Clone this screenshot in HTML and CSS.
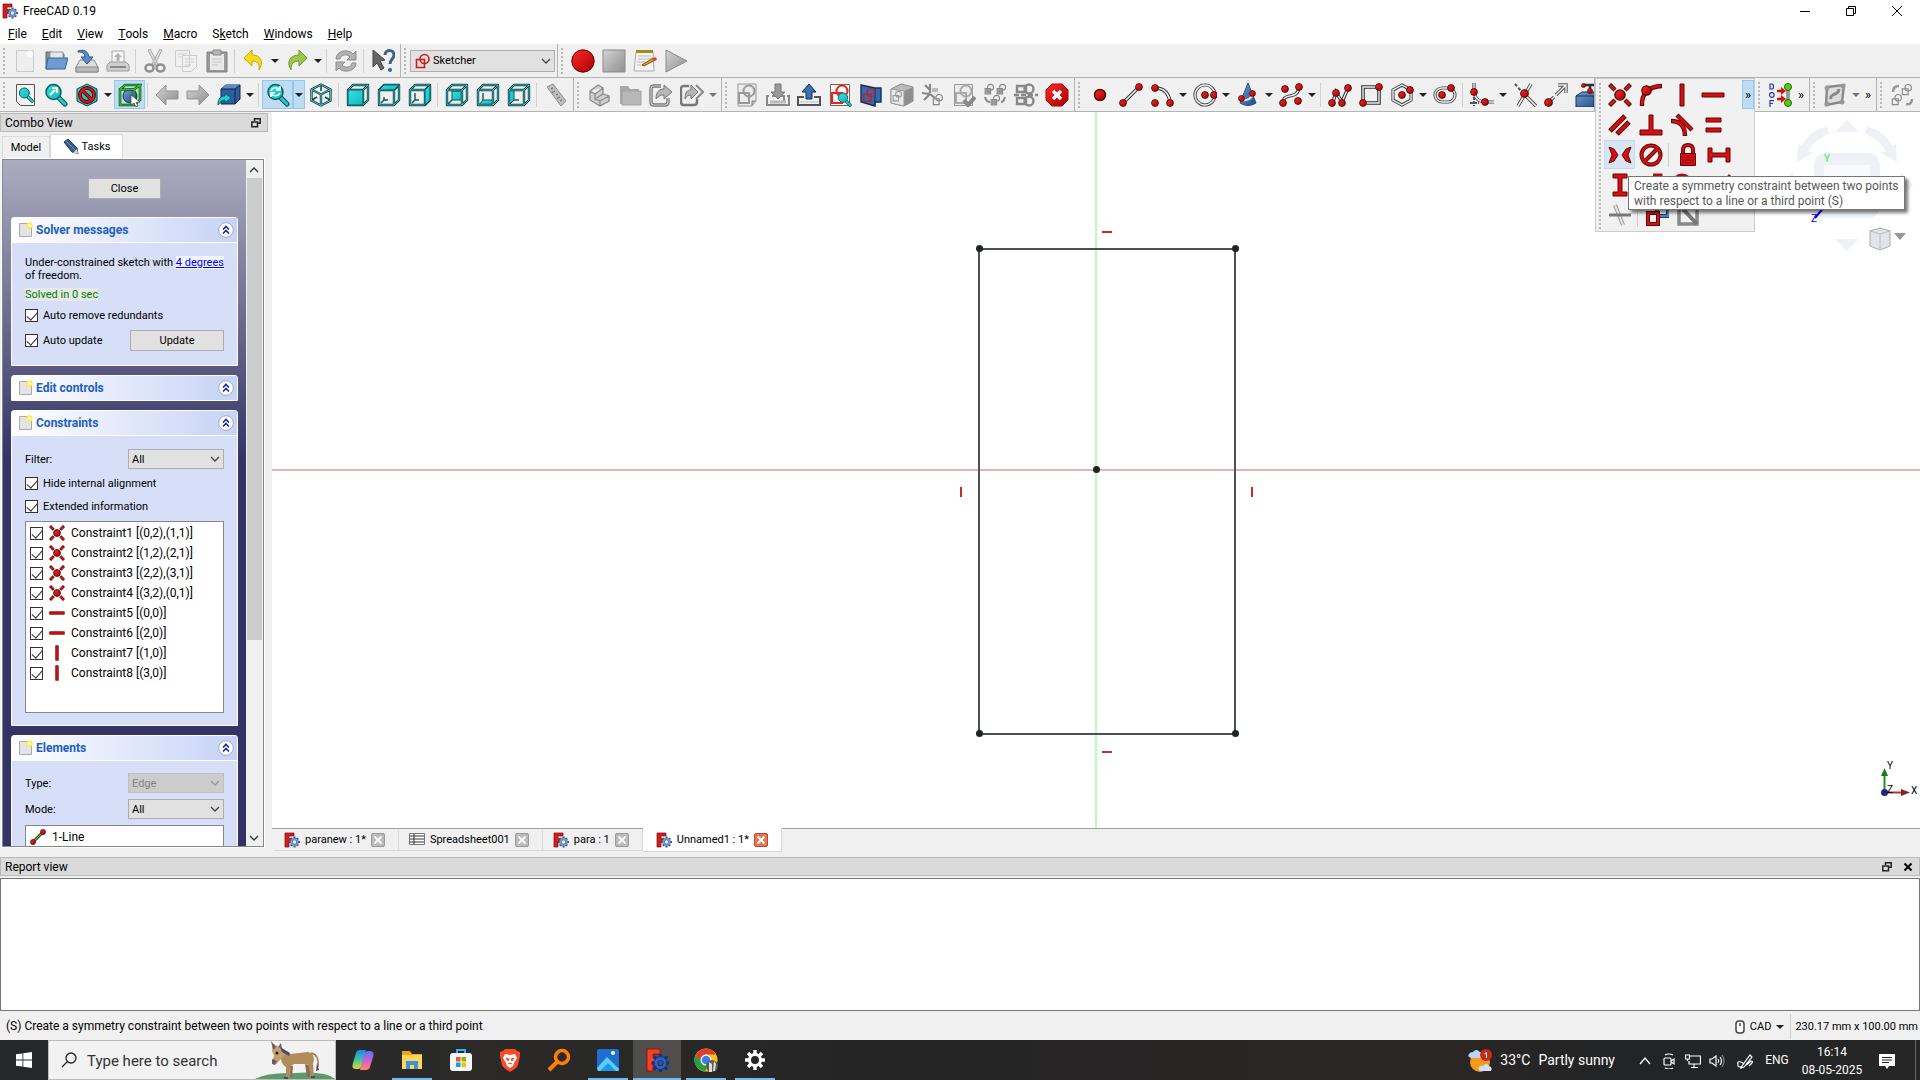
FILE: index.html
```html
<!DOCTYPE html>
<html lang="en">
<head>
  <meta charset="UTF-8">
  <meta name="viewport" content="width=device-width, initial-scale=1.0">
  <title>FreeCAD 0.19</title>
  <link rel="stylesheet" href="styles.css">
</head>
<body>

  <!-- Icon sprite -->
  <svg class="sprite" aria-hidden="true">
    <defs>
      <linearGradient id="g-cyan" x1="0" y1="0" x2="1" y2="1"><stop offset="0" stop-color="#34e0e2"/><stop offset="1" stop-color="#10b8bc"/></linearGradient>
      <linearGradient id="g-red" x1="0" y1="0" x2="1" y2="1"><stop offset="0" stop-color="#ff2a2a"/><stop offset="1" stop-color="#a40000"/></linearGradient>
      <linearGradient id="g-blue" x1="0" y1="0" x2="1" y2="1"><stop offset="0" stop-color="#729fcf"/><stop offset="1" stop-color="#204a87"/></linearGradient>
      <linearGradient id="g-gray" x1="0" y1="0" x2="1" y2="1"><stop offset="0" stop-color="#d4d4d4"/><stop offset="1" stop-color="#8e8e8e"/></linearGradient>
      <linearGradient id="g-copilot" x1="0" y1="0" x2="0" y2="1"><stop offset="0" stop-color="#1f8af0"/><stop offset=".5" stop-color="#38c6a0"/><stop offset="1" stop-color="#e8d030"/></linearGradient>
      <linearGradient id="g-copilot2" x1="0" y1="0" x2="0" y2="1"><stop offset="0" stop-color="#4a7cf0"/><stop offset=".5" stop-color="#d05cd8"/><stop offset="1" stop-color="#ff8a5a"/></linearGradient>
    </defs>

    <symbol id="dot" viewBox="0 0 8 8"><circle cx="4" cy="4" r="3.400" fill="url(#g-red)" stroke="#4a0606" stroke-width=".9"/></symbol>

    <symbol id="app" viewBox="0 0 16 16"><path d="M1 1h9v3H5v2.500h3v3H5V15H1z" fill="#d91a1f" stroke="#7a0c0c" stroke-width=".7"/><g stroke="#34527f" stroke-width="2"><path d="M10.500 4.500v2M10.500 13.500v2M5 10h2M14 10h2M6.800 6.300l1.200 1.200M13 12.500l1.200 1.200M14.200 6.300L13 7.500M8 12.500l-1.200 1.200"/></g><circle cx="10.500" cy="10" r="3" fill="#eef3fa" stroke="#4a72ae" stroke-width="2.400"/><circle cx="10.500" cy="10" r="3.100" fill="none" stroke="#7b9fd2" stroke-width="1.200"/></symbol>
    <symbol id="app-big" viewBox="0 0 24 24"><path d="M2 1h13v5H8v4h5v4H8v9H2z" fill="#f0432a" stroke="#a01008"/><path d="M15.500 6v3M15.500 21v3M6.500 15h3M21.500 15h3M9 8.500l2.500 2.500M19.500 19l2.500 2.500M22 8.500L19.500 11M11.500 19L9 21.500" stroke="#0d2f86" stroke-width="3"/><circle cx="15.500" cy="15" r="4.500" fill="#504e4d" stroke="#0d2f86" stroke-width="4.500"/><circle cx="15.500" cy="15" r="4.500" fill="none" stroke="#2a63c8" stroke-width="2.800"/></symbol>

    <symbol id="new" viewBox="0 0 24 24"><path d="M3.500 1.500h17v21h-17z" fill="#eee" stroke="#c9c9c9"/><circle cx="17" cy="5" r="3.500" fill="#fafafa"/></symbol>
    <symbol id="open" viewBox="0 0 24 24"><path d="M2 20V3h6l2 2h10v14z" fill="#8d8d8d" stroke="#666"/><path d="M6 3h13v9H6z" fill="#e8e8e8" stroke="#999"/><path d="M4 9h20l-3 11H2z" fill="#6f9bd1" stroke="#3465a4"/></symbol>
    <symbol id="save" viewBox="0 0 24 24"><path d="M5 11h14l4 7v5H1v-5z" fill="#ddd" stroke="#8b8b8b"/><path d="M1 18h22v5H1z" fill="#b9b9b9" stroke="#888"/><path d="M3 2c6-2 10 0 11 6h4l-6 7-6-7h4c0-4-3-5-7-5z" fill="#5b8bc4" stroke="#2a5490"/></symbol>
    <symbol id="print" viewBox="0 0 24 24"><path d="M6 2h12v12H6z" fill="#f5f5f5" stroke="#aaa"/><path d="M12 4l4 4h-2.500v4h-3V8H8z" fill="#b0b0b0"/><path d="M4 13h16l3 3v6H1v-6z" fill="#cfcfcf" stroke="#999"/><path d="M4 18h16" stroke="#888" stroke-width="2"/></symbol>
    <symbol id="cut" viewBox="0 0 24 24"><path d="M5 1l2-1 8 15-2 2zM19 1l-2-1-8 15 2 2z" fill="#ddd" stroke="#aaa"/><g fill="none" stroke="#909090" stroke-width="2.500"><ellipse cx="6.500" cy="19" rx="4" ry="3.500"/><ellipse cx="17.500" cy="19" rx="4" ry="3.500"/></g></symbol>
    <symbol id="copy" viewBox="0 0 24 24"><path d="M1.500 1.500h14v16h-14zM8.500 6.500h14v11l-5 5h-9z" fill="#f0f0f0" stroke="#ccc"/><path d="M4 5h9M4 8h4M11 10h9M11 13h9M11 16h6" stroke="#d0d0d0"/></symbol>
    <symbol id="paste" viewBox="0 0 24 24"><path d="M2 3h20v20H2z" fill="#999" stroke="#808080"/><path d="M5 5h14v16H5z" fill="#eaeaea"/><path d="M8 1h8v5H8z" fill="#b8b8b8" stroke="#888"/><path d="M7 10h10M7 13h10M7 16h6" stroke="#c4c4c4"/></symbol>
    <symbol id="undo" viewBox="0 0 24 24"><path d="M10 1v5c9 0 12 7 7 15 1-6-1-9-7-9v5L2 9z" fill="#f6dc1c" stroke="#c8a800"/></symbol>
    <symbol id="redo" viewBox="0 0 24 24"><path d="M14 1v5C5 6 1 13 6 21c0-6 2-9 8-9v5l8-8z" fill="#9fc54d" stroke="#6e9a28"/></symbol>
    <symbol id="refresh" viewBox="0 0 24 24"><path d="M2 10c0-8 12-11 17-5l3-3v9h-9l3-3c-4-4-9-2-10 2zM22 14c0 8-12 11-17 5l-3 3v-9h9l-3 3c4 4 9 2 10-2z" fill="#b2b2b2" stroke="#8c8c8c"/></symbol>
    <symbol id="whats" viewBox="0 0 24 24"><path d="M2 1l12 10-5 1 4 7-3 2-4-7-4 4z" fill="#666" stroke="#444"/><path d="M14 6c0-6 9-6 9 0 0 4-4 4-4 9" fill="none" stroke="#3a628f" stroke-width="3"/><circle cx="19" cy="21" r="2" fill="#3a628f"/></symbol>
    <symbol id="sketcher" viewBox="0 0 16 16"><g fill="none" stroke="#cc1d1d" stroke-width="1.600"><path d="M1.500 6.500h8v8h-8z"/><circle cx="9.500" cy="6" r="4.500"/></g></symbol>
    <symbol id="record" viewBox="0 0 24 24"><circle cx="12" cy="12" r="11.200" fill="url(#g-red)" stroke="#600"/></symbol>
    <symbol id="stop" viewBox="0 0 24 24"><path d="M1 1h22v22H1z" fill="url(#g-gray)" stroke="#8a8a8a"/></symbol>
    <symbol id="macro" viewBox="0 0 24 24"><path d="M3 3h17l1 19H1z" fill="#f4f4f4" stroke="#aaa"/><path d="M3 1h17v3H3z" fill="#a08c18"/><path d="M5 7h13M5 10h13M4 13h8M4 16h8" stroke="#b8b8b8"/><path d="M9 16l11-7 2 2-11 6z" fill="#dea032" stroke="#80540a"/><circle cx="22" cy="10" r="1.800" fill="#e33"/></symbol>
    <symbol id="play" viewBox="0 0 24 24"><path d="M2 1l21 11L2 23z" fill="url(#g-gray)" stroke="#8a8a8a"/></symbol>

    <symbol id="mag" viewBox="0 0 24 24"><path d="M13 13l8 8" stroke="#064c4e" stroke-width="5" stroke-linecap="round"/><path d="M13 13l8 8" stroke="#20cdd0" stroke-width="3" stroke-linecap="round"/><circle cx="9.500" cy="9" r="7.500" fill="url(#g-cyan)" stroke="#085f62" stroke-width="1.500"/></symbol>
    <symbol id="fitall" viewBox="0 0 24 24"><path d="M3.500 1.500h18v21h-14l-4-4z" fill="#f4f4f4" stroke="#555"/><use href="#mag" x="5" y="4" width="16" height="16"/></symbol>
    <symbol id="fitsel" viewBox="0 0 24 24"><use href="#mag"/><path d="M6 12l5-5M8 5h5v5" stroke="#fff" stroke-width="2.200" fill="none"/></symbol>
    <symbol id="drawstyle" viewBox="0 0 24 24"><path d="M12 1l10 5v12l-10 5-10-5V6z" fill="url(#g-cyan)" stroke="#0a4446"/><g fill="none" stroke="#400" stroke-width="3.800"><circle cx="12" cy="12" r="7"/><path d="M7 7l10 10"/></g><g fill="none" stroke="#d8141a" stroke-width="2.200"><circle cx="12" cy="12" r="7"/><path d="M7 7l10 10"/></g></symbol>
    <symbol id="bbox" viewBox="0 0 24 24"><circle cx="12" cy="13" r="7" fill="url(#g-blue)" stroke="#142c50"/><path d="M2 6.500h14V22H2zM2 6.500L7 2h15l-6 4.500M22 2v15l-6 5" fill="none" stroke="#174d10" stroke-width="2.600"/><path d="M2 6.500h14V22H2zM2 6.500L7 2h15l-6 4.500M22 2v15l-6 5" fill="none" stroke="#2fd02a" stroke-width="1.200"/><path d="M13 12l9 7-4 .5 2 3.500-2 1-2-4-3 2z" fill="#fff" stroke="#444" stroke-width=".8"/></symbol>
    <symbol id="back" viewBox="0 0 24 24"><path d="M1 12l10-10v6h12v8H11v6z" fill="url(#g-gray)" stroke="#929292"/></symbol>
    <symbol id="fwd" viewBox="0 0 24 24"><path d="M23 12L13 2v6H1v8h12v6z" fill="url(#g-gray)" stroke="#929292"/></symbol>
    <symbol id="linkgo" viewBox="0 0 24 24"><path d="M4 6l5-4h14v14l-5 5H4z" fill="#2d5f9e" stroke="#0e2444"/><path d="M4 6l5-4h14l-5 4z" fill="#5d8cc6"/><path d="M4 6h14v15M18 6l5-4" fill="none" stroke="#0e2444"/><path d="M1 22c0-7 3-9 7-9v-3l6 5-6 5v-3c-3 0-5 2-7 5z" fill="#1ad0d4" stroke="#0a5a5c"/></symbol>
    <symbol id="sync" viewBox="0 0 24 24"><use href="#mag"/><path d="M5 8c1-4 7-4 9-1M14 10c-2 4-7 3-9 1M14 3v4h-4M5 14v-4h4" stroke="#fff" stroke-width="1.500" fill="none"/></symbol>
    <symbol id="wire" viewBox="0 0 24 24"><path d="M2 7h15v15H2zM2 7l5-5h15l-5 5M22 2v15l-5 5" fill="none" stroke="#0b4548" stroke-width="2.400" stroke-linejoin="round"/><path d="M2 7h15v15H2zM2 7l5-5h15l-5 5M22 2v15l-5 5" fill="none" stroke="#4fc6c9" stroke-width=".8"/></symbol>
    <symbol id="iso" viewBox="0 0 24 24"><path d="M12 1.500l9.500 5v11l-9.500 5-9.500-5v-11zM2.500 6.500l9.500 5 9.500-5M12 11.500v11" fill="none" stroke="#0b4548" stroke-width="2.400"/><path d="M12 2v6M3 17l5-3M21 17l-5-3" stroke="#0b4548" stroke-width="1.500"/><path d="M12 1.500l9.500 5v11l-9.500 5-9.500-5v-11zM2.500 6.500l9.500 5 9.500-5M12 11.500v11" fill="none" stroke="#6fd4d6" stroke-width=".8"/></symbol>
    <symbol id="front" viewBox="0 0 24 24"><use href="#wire"/><path d="M2 7h15v15H2z" fill="url(#g-cyan)" stroke="#0b5558"/></symbol>
    <symbol id="top" viewBox="0 0 24 24"><path d="M7 14v3M4 20l3-3h4" fill="none" stroke="#0b5558" stroke-width="1.400"/><use href="#wire"/><path d="M2 7l5-5h15l-5 5z" fill="url(#g-cyan)" stroke="#0b5558"/></symbol>
    <symbol id="right" viewBox="0 0 24 24"><path d="M7 10v7M4 20l3-3h4" fill="none" stroke="#0b5558" stroke-width="1.400"/><use href="#wire"/><path d="M17 7l5-5v15l-5 5z" fill="url(#g-cyan)" stroke="#0b5558"/></symbol>
    <symbol id="rear" viewBox="0 0 24 24"><path d="M7 8h10v9H7z" fill="url(#g-cyan)" stroke="#0b5558"/><path d="M3 21l4-4" stroke="#0b5558" stroke-width="1.400"/><use href="#wire"/></symbol>
    <symbol id="bottom" viewBox="0 0 24 24"><path d="M3 22l4-5h10v5z" fill="url(#g-cyan)" stroke="#0b5558"/><path d="M7 10v7" stroke="#0b5558" stroke-width="1.400"/><use href="#wire"/></symbol>
    <symbol id="left" viewBox="0 0 24 24"><path d="M2 7h5v10l-5 5z" fill="url(#g-cyan)" stroke="#0b5558"/><path d="M7 17h5" stroke="#0b5558" stroke-width="1.400"/><use href="#wire"/></symbol>
    <symbol id="ruler" viewBox="0 0 24 24"><path d="M3 4l6-3 13 17-5 5z" fill="#bdbdbd" stroke="#909090"/><path d="M9 5l-2 1M11 8l-3 1.500M14 11l-2 1M16 14l-3 1.500M18 17l-2 1" stroke="#666"/></symbol>

    <symbol id="part" viewBox="0 0 24 24"><path d="M3 8l8-6 5 3v6l6 2v5l-9 5-10-6zM3 8l5 3 8-6M8 11v5l5 2v5M13 18l9-5M8 16l8-5" fill="#cfcfcf" stroke="#8c8c8c" stroke-width="1.300"/></symbol>
    <symbol id="folder" viewBox="0 0 24 24"><path d="M2 3h8l2 3h9v15H2z" fill="#a8a8a8"/><path d="M4 8h19v14H4z" fill="#b8b8b8" stroke="#a2a2a2"/></symbol>
    <symbol id="link" viewBox="0 0 24 24"><path d="M12 3H5Q2 3 2 6v13q0 3 3 3h11q3 0 3-3v-4" fill="none" stroke="#777" stroke-width="3.400"/><path d="M12 3H5Q2 3 2 6v13q0 3 3 3h11q3 0 3-3v-4" fill="none" stroke="#ccc" stroke-width="1.200"/><path d="M7 16c0-7 3-10 8-10V2l8 7-8 7v-4c-4 0-5 1-8 4z" fill="#b6b6b6" stroke="#777"/></symbol>
    <symbol id="links" viewBox="0 0 24 24"><path d="M9 3H4Q1 3 1 6v13q0 3 3 3h10q3 0 3-3v-3" fill="none" stroke="#777" stroke-width="2.400"/><path d="M5 16c0-7 2-9 6-9V2l7 7-7 7v-4c-3 0-4 1-6 4z" fill="#b6b6b6" stroke="#777"/><path d="M16 2l7 7-7 7" fill="none" stroke="#888" stroke-width="2"/></symbol>

    <symbol id="shape" viewBox="0 0 24 24"><g fill="none" stroke="currentColor" stroke-width="2"><path d="M4 10h10v10H4z"/><circle cx="14" cy="8" r="5.500"/></g></symbol>
    <symbol id="newsketch" viewBox="0 0 24 24"><path d="M3 1h18v17l-4 5H3z" fill="#ececec" stroke="#999"/><path d="M17 23v-5h4" fill="#bbb" stroke="#888"/><use href="#shape" color="#999"/></symbol>
    <symbol id="editsketch" viewBox="0 0 24 24"><path d="M3 13H1v9h22v-9h-2M6 13h12v6" fill="none" stroke="#888" stroke-width="2"/><path d="M4 19h16" stroke="#bbb" stroke-width="3"/><path d="M9 1h6v8h4l-7 7-7-7h4z" fill="#999" stroke="#777"/></symbol>
    <symbol id="leavesketch" viewBox="0 0 24 24"><path d="M7 14H1v8h22v-8h-6" fill="none" stroke="#4c5658" stroke-width="2"/><path d="M3 19h18" stroke="#d8d8d8" stroke-width="2"/><path d="M9 16V9H5l7-8 7 8h-4v7z" fill="#3a70b4" stroke="#122c52"/></symbol>
    <symbol id="viewsketch" viewBox="0 0 24 24"><path d="M2.500 1.500h19v21h-19z" fill="#f6f6f6" stroke="#666"/><use href="#shape" color="#f0201c"/><use href="#mag" x="9" y="9" width="15" height="15"/></symbol>
    <symbol id="section" viewBox="0 0 24 24"><path d="M2 2l14 3h6v14h-6v4L2 19z" fill="#326ab0" stroke="#172e52" stroke-width="1.400"/><path d="M16 5v18" stroke="#172e52"/><use href="#shape" x="2" y="4" width="17" height="17" color="#d01824"/></symbol>
    <symbol id="mapsketch" viewBox="0 0 24 24"><path d="M1 6l10-5 12 3v14l-9 5-13-3z" fill="#bbb" stroke="#888"/><path d="M14 8l9-4v14l-9 5z" fill="#8e8e8e"/><path d="M1 6l13 2v15L1 20z" fill="#eaeaea" stroke="#999"/><use href="#shape" x="1" y="7" width="13" height="13" color="#999"/></symbol>
    <symbol id="reorient" viewBox="0 0 24 24"><path d="M9 1v9M1 10l8 1M3 17l6-6M9 11l5 4M4 2l5 5" stroke="#888" stroke-width="2.200"/><path d="M11 5h6v4h-6z" fill="#bbb"/><use href="#shape" x="10" y="10" width="14" height="14" color="#888"/></symbol>
    <symbol id="validate" viewBox="0 0 24 24"><path d="M2.500 1.500h18v21h-18z" fill="#ececec" stroke="#999"/><use href="#shape" color="#aaa"/><path d="M12 17l4 5 7-8" stroke="#888" stroke-width="4" fill="none"/></symbol>
    <symbol id="merge" viewBox="0 0 24 24"><g color="#888" stroke-width="3"><use href="#shape" width="13" height="13"/><use href="#shape" x="12" width="13" height="13"/><use href="#shape" x="6" y="11" width="13" height="13"/></g><g fill="#999"><path d="M2 6h5v5H2zM14 6h5v5h-5zM8 17h5v5H8z"/></g><path d="M2 14c1 4 3 5 5 5M22 14c-1 4-3 5-4 5" stroke="#888" stroke-width="2" fill="none"/></symbol>
    <symbol id="mirror" viewBox="0 0 24 24"><g fill="none" stroke="#888" stroke-width="2.400"><path d="M3 3h9v6H3zM3 15h9v6H3z"/><circle cx="15" cy="6" r="4.500"/><circle cx="15" cy="18" r="4.500"/><path d="M0 12h24" stroke-dasharray="5 2"/></g></symbol>
    <symbol id="stopop" viewBox="0 0 24 24"><path d="M7 1h10l6 6v10l-6 6H7l-6-6V7z" fill="url(#g-red)" stroke="#b00"/><path d="M8 8l8 8M16 8l-8 8" stroke="#fff" stroke-width="3.400"/></symbol>

    <symbol id="point" viewBox="0 0 24 24"><use href="#dot" x="5.500" y="5.500" width="13" height="13"/></symbol>
    <symbol id="line" viewBox="0 0 24 24"><path d="M5 19L19 5" stroke="#333" stroke-width="3.600"/><path d="M5 19L19 5" stroke="#eee" stroke-width="1.600"/><use href="#dot" y="16" width="8" height="8"/><use href="#dot" x="16" y="0" width="8" height="8"/></symbol>
    <symbol id="arc" viewBox="0 0 24 24"><path d="M5 5q13 0 15 14" fill="none" stroke="#333" stroke-width="3.600"/><path d="M5 5q13 0 15 14" fill="none" stroke="#eee" stroke-width="1.600"/><use href="#dot" x="1" y="1" width="8" height="8"/><use href="#dot" x="1" y="16" width="8" height="8"/><use href="#dot" x="16" y="16" width="8" height="8"/></symbol>
    <symbol id="circle" viewBox="0 0 24 24"><circle cx="12" cy="12" r="10" fill="none" stroke="#444" stroke-width="3.200"/><circle cx="12" cy="12" r="10" fill="none" stroke="#eee" stroke-width="1.400"/><use href="#dot" x="8" y="8" width="8" height="8"/><use href="#dot" x="17" y="8" width="8" height="8"/></symbol>
    <symbol id="conic" viewBox="0 0 24 24"><path d="M12 0l8 20q-8 5-16 0z" fill="url(#g-blue)" stroke="#24508c"/><path d="M5 17c5 1 11-1 12-6" stroke="#ddd" stroke-width="2" fill="none"/><use href="#dot" x="2" y="12" width="7" height="7"/><use href="#dot" x="13" y="7" width="7" height="7"/></symbol>
    <symbol id="bspline" viewBox="0 0 24 24"><path d="M4 20C4 8 19 18 20 4" fill="none" stroke="#444" stroke-width="3.400"/><path d="M4 20C4 8 19 18 20 4" fill="none" stroke="#eee" stroke-width="1.400"/><use href="#dot" x="2" y="2" width="8" height="8"/><use href="#dot" x="16" y="0" width="8" height="8"/><use href="#dot" x="0" y="16" width="8" height="8"/><use href="#dot" x="15" y="14" width="8" height="8"/></symbol>
    <symbol id="polyline" viewBox="0 0 24 24"><path d="M5 19L8 9l6 10 6-14" fill="none" stroke="#333" stroke-width="3.400"/><path d="M5 19L8 9l6 10 6-14" fill="none" stroke="#eee" stroke-width="1.400"/><use href="#dot" y="16" width="8" height="8"/><use href="#dot" x="4" y="6" width="8" height="8"/><use href="#dot" x="10" y="16" width="8" height="8"/><use href="#dot" x="16" y="1" width="8" height="8"/></symbol>
    <symbol id="rect" viewBox="0 0 24 24"><path d="M4 4h16v16H4z" fill="none" stroke="#333" stroke-width="3.600"/><path d="M4 4h16v16H4z" fill="none" stroke="#eee" stroke-width="1.400"/><use href="#dot" y="16" width="8" height="8"/><use href="#dot" x="16" width="8" height="8"/></symbol>
    <symbol id="hexagon" viewBox="0 0 24 24"><path d="M12 2l9 5v10l-9 5-9-5V7z" fill="none" stroke="#444" stroke-width="3.200"/><path d="M12 2l9 5v10l-9 5-9-5V7z" fill="none" stroke="#eee" stroke-width="1.400"/><use href="#dot" x="8" y="8" width="8" height="8"/><use href="#dot" x="16" y="3" width="8" height="8"/></symbol>
    <symbol id="slot" viewBox="0 0 24 24"><rect x="2" y="5" width="20" height="14" rx="7" fill="none" stroke="#444" stroke-width="3.200"/><rect x="2" y="5" width="20" height="14" rx="7" fill="none" stroke="#eee" stroke-width="1.400"/><use href="#dot" x="5" y="8" width="8" height="8"/><use href="#dot" x="14" y="1" width="8" height="8"/></symbol>
    <symbol id="fillet" viewBox="0 0 24 24"><path d="M4 0v10q2 9 12 9h8" fill="none" stroke="#444" stroke-width="3.200"/><path d="M4 0v10q2 9 12 9h8" fill="none" stroke="#eee" stroke-width="1.400"/><path d="M4 14v9M0 20h9" stroke="#555" stroke-width="2" stroke-dasharray="3 1"/><use href="#dot" y="5" width="8" height="8"/><use href="#dot" x="11" y="15" width="8" height="8"/></symbol>
    <symbol id="trim" viewBox="0 0 24 24"><path d="M18 1L5 23M10 10l13 13" stroke="#444" stroke-width="3.400"/><path d="M18 1L5 23M10 10l13 13" stroke="#eee" stroke-width="1.600"/><path d="M2 1l8 9" stroke="#555" stroke-width="2" stroke-dasharray="3 2"/><use href="#dot" x="7" y="6" width="9" height="9"/></symbol>
    <symbol id="extend" viewBox="0 0 24 24"><path d="M5 19l5-5M12 12l9-9M14 2h8v8" fill="none" stroke="#555" stroke-width="3.400"/><path d="M5 19l5-5M12 12l9-9M14 2h8v8" fill="none" stroke="#eee" stroke-width="1.400"/><use href="#dot" y="15" width="9" height="9"/></symbol>
    <symbol id="external" viewBox="0 0 24 24"><path d="M1 13l6-4h17v10l-5 5H1z" fill="url(#g-blue)" stroke="#14305a"/><path d="M1 13h18v11" fill="none" stroke="#14305a"/><path d="M8 2h14M15 3v7" stroke="#333" stroke-width="2.500"/><use href="#dot" x="6" width="5" height="5"/><use href="#dot" x="12" y="5" width="6" height="6"/></symbol>

    <symbol id="coincident" viewBox="0 0 24 24"><path d="M1.500 1.500L7 7M22.500 1.500L17 7M1.500 22.500L7 17M22.500 22.500L17 17" stroke="#5c0808" stroke-width="4.400"/><path d="M2.300 2.300l4 4M21.700 2.300l-4 4M2.300 21.700l4-4M21.700 21.700l-4-4" stroke="#e01416" stroke-width="2.600"/><circle cx="12" cy="12" r="6.300" fill="#f1f1f1"/><use href="#dot" x="6" y="6" width="12" height="12"/></symbol>
    <symbol id="ponobj" viewBox="0 0 24 24"><path d="M3 23q-1-19 20-20" fill="none" stroke="#5c0808" stroke-width="4.400"/><path d="M3 22q0-18 19-19" fill="none" stroke="#d80f12" stroke-width="2.600"/><use href="#dot" x="2" y="2" width="11" height="11"/></symbol>
    <symbol id="vert" viewBox="0 0 24 24"><path d="M10 1h4v22h-4z" fill="#d80f12" stroke="#5c0808"/></symbol>
    <symbol id="horiz" viewBox="0 0 24 24"><path d="M1 10h22v4H1z" fill="#d80f12" stroke="#5c0808"/></symbol>
    <symbol id="parallel" viewBox="0 0 24 24"><path d="M2 18L17 3M9 21L21 9" stroke="#5c0808" stroke-width="5"/><path d="M2.700 17.300L16.300 3.700M9.700 20.300L20.300 9.700" stroke="#d80f12" stroke-width="3"/></symbol>
    <symbol id="perp" viewBox="0 0 24 24"><path d="M10 2h4v15h9v5H1v-5h9z" fill="#d80f12" stroke="#5c0808"/></symbol>
    <symbol id="tangent" viewBox="0 0 24 24"><path d="M7 2l15 15M1 8q14 0 14 15" fill="none" stroke="#5c0808" stroke-width="4.400"/><path d="M7.700 2.700l13.600 13.600M2 8q13 1 13 14" fill="none" stroke="#d80f12" stroke-width="2.600"/></symbol>
    <symbol id="equal" viewBox="0 0 24 24"><path d="M5 5h15v4H5zM5 15h15v4H5z" fill="#d80f12" stroke="#5c0808"/></symbol>
    <symbol id="symm" viewBox="0 0 24 24"><path d="M1 4l5 2 4 6-4 6-5 2 3-8zM23 4l-5 2-4 6 4 6 5 2-3-8z" fill="#d80f12" stroke="#5c0808"/></symbol>
    <symbol id="block" viewBox="0 0 24 24"><g fill="none" stroke="#5c0808" stroke-width="4"><circle cx="12" cy="12" r="9.500"/><path d="M5 19L19 5"/></g><g fill="none" stroke="#d80f12" stroke-width="2.200"><circle cx="12" cy="12" r="9.500"/><path d="M5 19L19 5"/></g></symbol>
    <symbol id="lock" viewBox="0 0 24 24"><path d="M7 11V7q0-5 5-5t5 5v4" fill="none" stroke="#5c0808" stroke-width="4"/><path d="M7 12V7q0-5 5-5t5 5v5" fill="none" stroke="#d80f12" stroke-width="2.200"/><path d="M4.500 10.500h15v12h-15z" fill="#d80f12" stroke="#5c0808"/><path d="M6 14h12M6 17h12M6 20h12" stroke="#8b1010"/></symbol>
    <symbol id="hdist" viewBox="0 0 24 24"><path d="M1 5h4v5h14V5h4v14h-4v-5H5v5H1z" fill="#d80f12" stroke="#5c0808"/></symbol>
    <symbol id="vdist" viewBox="0 0 24 24"><path d="M5 1h14v4h-5v14h5v4H5v-4h5V5H5z" fill="#d80f12" stroke="#5c0808"/></symbol>
    <symbol id="dist" viewBox="0 0 24 24"><path d="M3 21L21 3M14 2h8v8" fill="none" stroke="#b01014" stroke-width="3"/></symbol>
    <symbol id="radius" viewBox="0 0 24 24"><circle cx="12" cy="11" r="9" fill="none" stroke="#b01014" stroke-width="3"/></symbol>
    <symbol id="angle" viewBox="0 0 24 24"><path d="M2 22L17 2M2 22h20" fill="none" stroke="#b01014" stroke-width="3"/></symbol>
    <symbol id="snell" viewBox="0 0 24 24"><path d="M7 2l8 20" stroke="#999" stroke-width="4"/><path d="M7 2l8 20" stroke="#e6e6e6" stroke-width="2"/><path d="M1 12h22" stroke="#777" stroke-width="3"/></symbol>
    <symbol id="driving" viewBox="0 0 24 24"><path d="M12 2h11v11H12z" fill="none" stroke="#1b3c68" stroke-width="4"/><path d="M12 2h11v11H12z" fill="none" stroke="#4d86c8" stroke-width="2"/><path d="M3 10h10v11H3z" fill="#f1f1f1" stroke="#5c0808" stroke-width="4"/><path d="M3 10h10v11H3z" fill="none" stroke="#d80f12" stroke-width="2.200"/></symbol>
    <symbol id="activate" viewBox="0 0 24 24"><path d="M3 4h18v17H3z" fill="none" stroke="#888" stroke-width="3.500"/><path d="M4 3l17 18" stroke="#777" stroke-width="4"/></symbol>

    <symbol id="dof" viewBox="0 0 24 24"><path d="M20 4v17" stroke="#445" stroke-width="3"/><path d="M20 4v17" stroke="#eee" stroke-width="1"/><path d="M9 8h6M9 16h6" stroke="#b11" stroke-width="2.500"/><path d="M13 4l5 4-5 4zM13 12l5 4-5 4z" fill="#d11"/><circle cx="20" cy="4" r="3.500" fill="#5c1" stroke="#260"/><circle cx="20" cy="20" r="3.500" fill="#5c1" stroke="#260"/><g fill="none" stroke="#2538b8" stroke-width="1.200"><path d="M2 1h1.500q2 0 2 2.500T3.500 6H2zM2 17v7M2 17.600h4M2 20.500h3"/><circle cx="3.800" cy="12" r="2.300"/></g></symbol>
    <symbol id="bsinfo" viewBox="0 0 24 24"><path d="M4 4l17-2-2 17-16 3z" fill="#ddd" stroke="#888" stroke-width="2.400"/><path d="M8 16c-2-6 8-3 8-10" fill="none" stroke="#888" stroke-width="3"/><g fill="#999"><circle cx="4" cy="5" r="2.500"/><circle cx="20" cy="3" r="2.500"/><circle cx="19" cy="19" r="2.500"/><circle cx="4" cy="21" r="2.500"/></g></symbol>
    <symbol id="vspace" viewBox="0 0 24 24"><g color="#8a8a8a"><use href="#shape" x="10" y="0" width="14" height="14"/><use href="#shape" x="0" y="10" width="14" height="14"/></g><path d="M3 9q0-6 6-6M22 16q0 6-6 5" fill="none" stroke="#999" stroke-width="2.500"/></symbol>

    <symbol id="task" viewBox="0 0 16 16"><path d="M1.500 1.500h12v13h-12z" fill="#e4e4e4" stroke="#aaa"/><circle cx="11.500" cy="3.500" r="3.200" fill="#f7ef4a"/><circle cx="11.500" cy="3.500" r="1.300" fill="#fff"/></symbol>
    <symbol id="pencil" viewBox="0 0 16 16"><path d="M1 3l4-3 9 9 1 6-6-2z" fill="#3a6089" stroke="#1a3350"/><path d="M3 2l9 9" stroke="#6f93b8"/><path d="M14 10l1 5-5-1z" fill="#ddd"/></symbol>
    <symbol id="chevrons" viewBox="0 0 16 16"><circle cx="8" cy="8" r="7.300" fill="#fff" stroke="#a4a8cc"/><path d="M5 7.500l3-3 3 3M5 11.500l3-3 3 3" fill="none" stroke="#0c2e94" stroke-width="1.600"/></symbol>
    <symbol id="greenline" viewBox="0 0 16 16"><path d="M3 13L13 3" stroke="#2c5a14" stroke-width="3"/><path d="M3 13L13 3" stroke="#7cc242" stroke-width="1"/><use href="#dot" y="10" width="6" height="6"/><use href="#dot" x="10" width="6" height="6"/></symbol>
    <symbol id="float" viewBox="0 0 10 10"><path d="M3.500 3V.8h5.700v4.400H7" fill="none" stroke="#222" stroke-width="1.500"/><path d="M.8 4h5.700v4.700H.8z" fill="none" stroke="#222" stroke-width="1.500"/></symbol>
    <symbol id="xmark" viewBox="0 0 10 10"><path d="M1.500 1.500l7 7M8.500 1.500l-7 7" stroke="currentColor" stroke-width="2"/></symbol>
    <symbol id="down" viewBox="0 0 10 6"><path d="M1 1l4 4 4-4" fill="none" stroke="currentColor" stroke-width="1.300"/></symbol>
    <symbol id="sheet" viewBox="0 0 16 14"><path d="M.5.500h15v11H.5z" fill="#fff" stroke="#777"/><path d="M1 3h14M1 6h14M1 9h14M5 1v10" stroke="#333"/></symbol>
  </svg>

  <header class="titlebar">
    <svg class="i16"><use href="#app"/></svg>
    <h1>FreeCAD 0.19</h1>
    <div class="window-buttons">
      <button aria-label="Minimize"><svg class="i10" viewBox="0 0 10 10"><path d="M0 5.500h10" stroke="#000"/></svg></button>
      <button aria-label="Restore"><svg class="i10" viewBox="0 0 10 10"><path d="M.5 2.500h7v7h-7zM2.500 2.500v-2h7v7h-2" fill="none" stroke="#000"/></svg></button>
      <button aria-label="Close"><svg class="i10" viewBox="0 0 10 10"><path d="M0 0l10 10M10 0L0 10" stroke="#000"/></svg></button>
    </div>
  </header>

  <nav class="menubar">
    <button><u>F</u>ile</button>
    <button><u>E</u>dit</button>
    <button><u>V</u>iew</button>
    <button><u>T</u>ools</button>
    <button><u>M</u>acro</button>
    <button>S<u>k</u>etch</button>
    <button><u>W</u>indows</button>
    <button><u>H</u>elp</button>
  </nav>

  <div class="toolrow">
    <div class="toolbar">
      <button class="tool" aria-label="New"><svg><use href="#new"/></svg></button>
      <button class="tool" aria-label="Open"><svg><use href="#open"/></svg></button>
      <button class="tool" aria-label="Save"><svg><use href="#save"/></svg></button>
      <button class="tool" aria-label="Print"><svg><use href="#print"/></svg></button>
      <i class="sep"></i>
      <button class="tool" aria-label="Cut"><svg><use href="#cut"/></svg></button>
      <button class="tool" aria-label="Copy"><svg><use href="#copy"/></svg></button>
      <button class="tool" aria-label="Paste"><svg><use href="#paste"/></svg></button>
      <i class="sep"></i>
      <button class="tool" aria-label="Undo"><svg><use href="#undo"/></svg></button>
      <button class="caret" aria-label="Undo list"></button>
      <button class="tool" aria-label="Redo"><svg><use href="#redo"/></svg></button>
      <button class="caret" aria-label="Redo list"></button>
      <i class="sep"></i>
      <button class="tool" aria-label="Refresh"><svg><use href="#refresh"/></svg></button>
      <i class="sep"></i>
      <button class="tool" aria-label="What's this?"><svg><use href="#whats"/></svg></button>
    </div>
    <div class="toolbar">
      <div class="combo workbench">
        <svg class="i16 combo-icon"><use href="#sketcher"/></svg>
        <select aria-label="Workbench"><option>Sketcher</option></select>
        <svg class="combo-arrow"><use href="#down"/></svg>
      </div>
    </div>
    <div class="toolbar toolbar-last">
      <button class="tool" aria-label="Record macro"><svg><use href="#record"/></svg></button>
      <button class="tool" aria-label="Stop recording"><svg><use href="#stop"/></svg></button>
      <button class="tool" aria-label="Macros"><svg><use href="#macro"/></svg></button>
      <button class="tool" aria-label="Run macro"><svg><use href="#play"/></svg></button>
    </div>
  </div>

  <div class="toolrow">
    <div class="toolbar">
      <button class="tool" aria-label="Fit all"><svg><use href="#fitall"/></svg></button>
      <button class="tool" aria-label="Fit selection"><svg><use href="#fitsel"/></svg></button>
      <button class="tool" aria-label="Draw style"><svg><use href="#drawstyle"/></svg></button>
      <button class="caret" aria-label="Draw styles"></button>
      <button class="tool on" aria-label="Bounding box"><svg><use href="#bbox"/></svg></button>
      <i class="sep"></i>
      <button class="tool" aria-label="Back"><svg><use href="#back"/></svg></button>
      <button class="tool" aria-label="Forward"><svg><use href="#fwd"/></svg></button>
      <button class="tool" aria-label="Go to linked object"><svg><use href="#linkgo"/></svg></button>
      <button class="caret" aria-label="Link options"></button>
      <i class="sep"></i>
      <button class="tool on" aria-label="Sync view"><svg><use href="#sync"/></svg></button>
      <button class="caret on" aria-label="Sync options"></button>
      <button class="tool" aria-label="Isometric"><svg><use href="#iso"/></svg></button>
      <i class="sep"></i>
      <button class="tool" aria-label="Front"><svg><use href="#front"/></svg></button>
      <button class="tool" aria-label="Top"><svg><use href="#top"/></svg></button>
      <button class="tool" aria-label="Right"><svg><use href="#right"/></svg></button>
      <i class="sep"></i>
      <button class="tool" aria-label="Rear"><svg><use href="#rear"/></svg></button>
      <button class="tool" aria-label="Bottom"><svg><use href="#bottom"/></svg></button>
      <button class="tool" aria-label="Left"><svg><use href="#left"/></svg></button>
      <i class="sep"></i>
      <button class="tool" aria-label="Measure distance"><svg><use href="#ruler"/></svg></button>
    </div>
    <div class="toolbar">
      <button class="tool" aria-label="Create part"><svg><use href="#part"/></svg></button>
      <button class="tool" aria-label="Create group"><svg><use href="#folder"/></svg></button>
      <button class="tool" aria-label="Make link"><svg><use href="#link"/></svg></button>
      <button class="tool" aria-label="Make sub-link"><svg><use href="#links"/></svg></button>
      <button class="caret off" aria-label="Link actions"></button>
    </div>
    <div class="toolbar">
      <button class="tool" aria-label="Create sketch"><svg><use href="#newsketch"/></svg></button>
      <button class="tool" aria-label="Edit sketch"><svg><use href="#editsketch"/></svg></button>
      <button class="tool" aria-label="Leave sketch"><svg><use href="#leavesketch"/></svg></button>
      <button class="tool" aria-label="View sketch"><svg><use href="#viewsketch"/></svg></button>
      <button class="tool" aria-label="View section"><svg><use href="#section"/></svg></button>
      <button class="tool" aria-label="Map sketch to face"><svg><use href="#mapsketch"/></svg></button>
      <button class="tool" aria-label="Reorient sketch"><svg><use href="#reorient"/></svg></button>
      <button class="tool" aria-label="Validate sketch"><svg><use href="#validate"/></svg></button>
      <button class="tool" aria-label="Merge sketches"><svg><use href="#merge"/></svg></button>
      <button class="tool" aria-label="Mirror sketch"><svg><use href="#mirror"/></svg></button>
      <button class="tool" aria-label="Stop operation"><svg><use href="#stopop"/></svg></button>
    </div>
    <div class="toolbar geometry">
      <button class="tool" aria-label="Point"><svg><use href="#point"/></svg></button>
      <button class="tool" aria-label="Line"><svg><use href="#line"/></svg></button>
      <button class="tool" aria-label="Arc"><svg><use href="#arc"/></svg></button>
      <button class="caret" aria-label="Arcs"></button>
      <button class="tool" aria-label="Circle"><svg><use href="#circle"/></svg></button>
      <button class="caret" aria-label="Circles"></button>
      <button class="tool" aria-label="Conic"><svg><use href="#conic"/></svg></button>
      <button class="caret" aria-label="Conics"></button>
      <button class="tool" aria-label="B-spline"><svg><use href="#bspline"/></svg></button>
      <button class="caret" aria-label="B-splines"></button>
      <i class="sep"></i>
      <button class="tool" aria-label="Polyline"><svg><use href="#polyline"/></svg></button>
      <button class="tool" aria-label="Rectangle"><svg><use href="#rect"/></svg></button>
      <button class="tool" aria-label="Polygon"><svg><use href="#hexagon"/></svg></button>
      <button class="caret" aria-label="Polygons"></button>
      <button class="tool" aria-label="Slot"><svg><use href="#slot"/></svg></button>
      <i class="sep"></i>
      <button class="tool" aria-label="Fillet"><svg><use href="#fillet"/></svg></button>
      <button class="caret" aria-label="Fillets"></button>
      <button class="tool" aria-label="Trim"><svg><use href="#trim"/></svg></button>
      <button class="tool" aria-label="Extend"><svg><use href="#extend"/></svg></button>
      <button class="tool" aria-label="External geometry"><svg><use href="#external"/></svg></button>
    </div>

    <!-- Constraints toolbar, unfolded over the 3D view -->
    <div class="constraints-slot">
      <div class="popup">
        <div class="popup-rows">
          <div class="popup-row">
            <button class="tool" aria-label="Coincident"><svg><use href="#coincident"/></svg></button>
            <button class="tool" aria-label="Point on object"><svg><use href="#ponobj"/></svg></button>
            <button class="tool" aria-label="Vertical"><svg><use href="#vert"/></svg></button>
            <button class="tool" aria-label="Horizontal"><svg><use href="#horiz"/></svg></button>
          </div>
          <div class="popup-row">
            <button class="tool" aria-label="Parallel"><svg><use href="#parallel"/></svg></button>
            <button class="tool" aria-label="Perpendicular"><svg><use href="#perp"/></svg></button>
            <button class="tool" aria-label="Tangent"><svg><use href="#tangent"/></svg></button>
            <button class="tool" aria-label="Equal"><svg><use href="#equal"/></svg></button>
          </div>
          <div class="popup-row">
            <button class="tool hover" aria-label="Symmetric" aria-describedby="tip"><svg><use href="#symm"/></svg></button>
            <button class="tool" aria-label="Block"><svg><use href="#block"/></svg></button>
            <i class="sep"></i>
            <button class="tool" aria-label="Lock"><svg><use href="#lock"/></svg></button>
            <button class="tool" aria-label="Horizontal distance"><svg><use href="#hdist"/></svg></button>
          </div>
          <div class="popup-row">
            <button class="tool" aria-label="Vertical distance"><svg><use href="#vdist"/></svg></button>
            <button class="tool" aria-label="Distance"><svg><use href="#dist"/></svg></button>
            <button class="tool" aria-label="Radius"><svg><use href="#radius"/></svg></button>
            <button class="caret" aria-label="Radius options"></button>
            <button class="tool" aria-label="Angle"><svg><use href="#angle"/></svg></button>
          </div>
          <div class="popup-row">
            <button class="tool" aria-label="Snell's law"><svg><use href="#snell"/></svg></button>
            <i class="sep"></i>
            <button class="tool" aria-label="Toggle driving"><svg><use href="#driving"/></svg></button>
            <button class="tool" aria-label="Activate"><svg><use href="#activate"/></svg></button>
          </div>
        </div>
        <button class="more on">»</button>
        <div class="tooltip" id="tip" role="tooltip">Create a symmetry constraint between two points<br>with respect to a line or a third point (S)</div>
      </div>
    </div>

    <div class="toolbar">
      <button class="tool" aria-label="Select DOF"><svg><use href="#dof"/></svg></button>
      <button class="more">»</button>
    </div>
    <div class="toolbar">
      <button class="tool" aria-label="B-spline info"><svg><use href="#bsinfo"/></svg></button>
      <button class="caret off" aria-label="B-spline info list"></button>
      <button class="more">»</button>
    </div>
    <div class="toolbar toolbar-last">
      <button class="tool" aria-label="Virtual space"><svg><use href="#vspace"/></svg></button>
    </div>
  </div>

  <main class="workspace">
    <aside class="combo-view">
      <div class="dock-title">
        <h2>Combo View</h2>
        <button aria-label="Float"><svg class="i10"><use href="#float"/></svg></button>
      </div>
      <div class="side-tabs">
        <button class="side-tab">Model</button>
        <button class="side-tab active"><svg class="i16"><use href="#pencil"/></svg>Tasks</button>
      </div>
      <div class="task-frame">
        <div class="task-panel">
          <button class="push close-task">Close</button>

          <section class="group">
            <h3 class="group-head"><svg class="i16"><use href="#task"/></svg>Solver messages<svg class="i16 fold"><use href="#chevrons"/></svg></h3>
            <div class="group-body solver">
              <p>Under-constrained sketch with <a href="#">4 degrees</a><br>of freedom.</p>
              <p class="solved"><span>Solved in 0 sec</span></p>
              <label class="check"><input type="checkbox" checked>Auto remove redundants</label>
              <div class="field">
                <label class="check"><input type="checkbox" checked>Auto update</label>
                <button class="push">Update</button>
              </div>
            </div>
          </section>

          <section class="group">
            <h3 class="group-head"><svg class="i16"><use href="#task"/></svg>Edit controls<svg class="i16 fold"><use href="#chevrons"/></svg></h3>
          </section>

          <section class="group">
            <h3 class="group-head"><svg class="i16"><use href="#task"/></svg>Constraints<svg class="i16 fold"><use href="#chevrons"/></svg></h3>
            <div class="group-body constraints">
              <div class="field">
                <label for="filter">Filter:</label>
                <div class="combo"><select id="filter"><option>All</option></select><svg class="combo-arrow"><use href="#down"/></svg></div>
              </div>
              <label class="check"><input type="checkbox" checked>Hide internal alignment</label>
              <label class="check"><input type="checkbox" checked>Extended information</label>
              <ul class="list">
                <li><label><input type="checkbox" checked><svg class="i16"><use href="#coincident"/></svg>Constraint1 [(0,2),(1,1)]</label></li>
                <li><label><input type="checkbox" checked><svg class="i16"><use href="#coincident"/></svg>Constraint2 [(1,2),(2,1)]</label></li>
                <li><label><input type="checkbox" checked><svg class="i16"><use href="#coincident"/></svg>Constraint3 [(2,2),(3,1)]</label></li>
                <li><label><input type="checkbox" checked><svg class="i16"><use href="#coincident"/></svg>Constraint4 [(3,2),(0,1)]</label></li>
                <li><label><input type="checkbox" checked><svg class="i16"><use href="#horiz"/></svg>Constraint5 [(0,0)]</label></li>
                <li><label><input type="checkbox" checked><svg class="i16"><use href="#horiz"/></svg>Constraint6 [(2,0)]</label></li>
                <li><label><input type="checkbox" checked><svg class="i16"><use href="#vert"/></svg>Constraint7 [(1,0)]</label></li>
                <li><label><input type="checkbox" checked><svg class="i16"><use href="#vert"/></svg>Constraint8 [(3,0)]</label></li>
              </ul>
            </div>
          </section>

          <section class="group">
            <h3 class="group-head"><svg class="i16"><use href="#task"/></svg>Elements<svg class="i16 fold"><use href="#chevrons"/></svg></h3>
            <div class="group-body elements">
              <div class="field">
                <label for="type">Type:</label>
                <div class="combo disabled"><select id="type" disabled><option>Edge</option></select><svg class="combo-arrow"><use href="#down"/></svg></div>
              </div>
              <div class="field">
                <label for="mode">Mode:</label>
                <div class="combo"><select id="mode"><option>All</option></select><svg class="combo-arrow"><use href="#down"/></svg></div>
              </div>
              <ul class="list edges">
                <li><svg class="i16"><use href="#greenline"/></svg>1-Line</li>
              </ul>
            </div>
          </section>
        </div>
        <div class="scrollbar">
          <svg class="scroll-arrow up"><use href="#down"/></svg>
          <div class="thumb"></div>
          <svg class="scroll-arrow"><use href="#down"/></svg>
        </div>
      </div>
    </aside>

    <div class="document">
      <div class="view3d">
        <svg viewBox="0 0 1648 716" preserveAspectRatio="xMidYMid slice">
          <path d="M824 0v716" stroke="#b9ffb9" stroke-width="2"/>
          <path d="M0 358h1648" stroke="#e6b1b1" stroke-width="2"/>
          <path d="M707 137h256v485H707z" fill="none" stroke="#4a4f5b" stroke-width="2"/>
          <g fill="#202428">
            <circle cx="707.500" cy="136.500" r="3.500"/>
            <circle cx="963.500" cy="136.500" r="3.500"/>
            <circle cx="707.500" cy="621.500" r="3.500"/>
            <circle cx="963.500" cy="621.500" r="3.500"/>
            <circle cx="824.500" cy="357.500" r="3.500"/>
          </g>
          <path d="M830 120h10M830 640h10M689 375v10M980 375v10" stroke="#c92a2a" stroke-width="2"/>

          <!-- navigation cube -->
          <g fill="#eef2f6">
            <path d="M1575 8l12 12h-24zM1575 139l-12-12h24zM1641 73l-12-13v26zM1509 73l12-13v26z"/>
            <path d="M1555 14q-19 6-25 20l-4-2-1 18 16-9-5-2q6-11 21-17zM1595 14q19 6 25 20l4-2 1 18-16-9 5-2q-6-11-21-17z"/>
            <rect x="1542" y="41" width="66" height="65" rx="12"/>
          </g>
          <path d="M1552 53h46v43h-46z" fill="#f8fafb"/>
          <path d="M1553 94l-10 12" stroke="#00f" stroke-width="2"/>
          <g font-family="Roboto, sans-serif" font-size="10">
            <text x="1552" y="50" fill="#3ce63c">Y</text>
            <text x="1539" y="110" fill="#00f">Z</text>
          </g>
          <path d="M1598 119l10-3 10 3v15l-10 4-10-4z" fill="#e0e5e9" stroke="#a2a8ad"/>
          <path d="M1598 119l10 3 10-3M1608 122v16" fill="none" stroke="#b9bec2"/>
          <path d="M1622 121h12l-6 7z" fill="#999"/>

          <!-- axis cross -->
          <path d="M1612.500 680v-20" stroke="#1f8f1f" stroke-width="2"/>
          <path d="M1612.500 656l3.500 8h-7z" fill="#1f7a1f"/>
          <path d="M1613 680.500h18" stroke="#b33" stroke-width="2"/>
          <path d="M1638 680.500l-9-3.500v7z" fill="#822"/>
          <circle cx="1612.500" cy="680.500" r="3.500" fill="#22228c"/>
          <g font-family="Roboto, sans-serif" font-size="10">
            <text x="1615" y="657">Y</text>
            <text x="1615" y="681">Z</text>
            <text x="1639" y="682">X</text>
          </g>
        </svg>
      </div>
      <div class="doc-tabs">
        <div class="doc-tab"><svg class="i16"><use href="#app"/></svg><span>paranew : 1*</span><button aria-label="Close paranew"><svg class="i10"><use href="#xmark"/></svg></button></div>
        <div class="doc-tab"><svg class="i16"><use href="#sheet"/></svg><span>Spreadsheet001</span><button aria-label="Close Spreadsheet001"><svg class="i10"><use href="#xmark"/></svg></button></div>
        <div class="doc-tab"><svg class="i16"><use href="#app"/></svg><span>para : 1</span><button aria-label="Close para"><svg class="i10"><use href="#xmark"/></svg></button></div>
        <div class="doc-tab active"><svg class="i16"><use href="#app"/></svg><span>Unnamed1 : 1*</span><button aria-label="Close Unnamed1"><svg class="i10"><use href="#xmark"/></svg></button></div>
      </div>
    </div>
  </main>

  <section class="report">
    <div class="dock-title">
      <h2>Report view</h2>
      <button aria-label="Float"><svg class="i10"><use href="#float"/></svg></button>
      <button aria-label="Close"><svg class="i10"><use href="#xmark"/></svg></button>
    </div>
    <textarea aria-label="Report view" readonly></textarea>
  </section>

  <footer class="statusbar">
    <span class="status-text">(S) Create a symmetry constraint between two points with respect to a line or a third point</span>
    <button class="nav-style"><svg class="mouse" viewBox="0 0 10 14"><rect x="1" y="1" width="8" height="12" rx="3" fill="#fff" stroke="#444" stroke-width="1.500"/><path d="M5 3v3" stroke="#444" stroke-width="1.500"/></svg>CAD<i class="tri"></i></button>
    <span class="dims">230.17 mm x 100.00 mm</span>
  </footer>

  <div class="taskbar">
    <button class="start" aria-label="Start"><svg viewBox="0 0 16 16"><path d="M0 2.300l6.500-.9v6.200H0zM7.300 1.300L16 0v7.600H7.300zM0 8.400h6.500v6.200L0 13.700zM7.300 8.400H16V16l-8.700-1.200z" fill="#fff"/></svg></button>
    <div class="search">
      <svg class="search-icon" viewBox="0 0 16 16"><circle cx="10" cy="6" r="5" fill="none" stroke="#222" stroke-width="1.300"/><path d="M6.500 9.500L1 15" stroke="#222" stroke-width="1.300"/></svg>
      <input type="text" placeholder="Type here to search" aria-label="Search">
      <svg class="donkey" viewBox="0 0 80 38">
        <path d="M0 38q12-7 40-6 30-2 40 6z" fill="#5c9a6c"/>
        <path d="M56 12q8 1 7 14" stroke="#9a7a50" stroke-width="1.500" fill="none"/>
        <path d="M62 22l2 7-3 1z" fill="#5a4668"/>
        <path d="M33 24l5 1-1 11h-3zM50 23l5 1v12h-3z" fill="#8a6b58"/>
        <path d="M22 9l8 3 5 1 18-2q6 1 6 7l-1 5 1 13h-3l-3-13-14 0-3 2-1 11h-4V26q-4-2-5-8z" fill="#b08d5a"/>
        <path d="M29 36h4v2h-4zM56 35h4v2h-4z" fill="#4f4265"/>
        <path d="M19 3l6 4q5 1 6 6l-5 5-5 5-4-2 2-6-2-5z" fill="#c2a069"/>
        <path d="M16 0l5 6-3 3zM26 2l1 6-4-2z" fill="#6e5a5e"/>
        <path d="M25 6l10 6-1 3-7-4z" fill="#5a4668"/>
        <circle cx="22" cy="12" r="1.500" fill="#1c1838"/>
        <path d="M17 18l5 2-2 4-3-1z" fill="#6a5878"/>
      </svg>
    </div>
    <div class="apps">
      <button class="app" aria-label="Copilot"><svg viewBox="0 0 24 24"><path d="M9 2h6l-4 15q-1 4-4 4H5q-5 0-3-6L5 5q1-3 4-3z" fill="url(#g-copilot)"/><path d="M15 22H9l4-15q1-4 4-4h2q5 0 3 6l-3 10q-1 3-4 3z" fill="url(#g-copilot2)"/></svg></button>
      <button class="app running" aria-label="File Explorer"><svg viewBox="0 0 24 24"><path d="M2 3h8l2 3h10v15H2z" fill="#e9a820"/><path d="M2 7h20v14H2z" fill="#ffd55e"/><path d="M6 21v-8h12v8h-4v-4h-4v4z" fill="#3a93dc"/></svg></button>
      <button class="app" aria-label="Store"><svg viewBox="0 0 24 24"><path d="M8 6V2h8v4" fill="none" stroke="#35b4ee" stroke-width="2"/><rect x="1" y="5" width="22" height="18" rx="3" fill="#f4f6f8"/><path d="M7 9h4.500v4.500H7z" fill="#f35325"/><path d="M12.500 9H17v4.500h-4.500z" fill="#81bc06"/><path d="M7 14.500h4.500V19H7z" fill="#05a6f0"/><path d="M12.500 14.500H17V19h-4.500z" fill="#ffba08"/></svg></button>
      <button class="app" aria-label="Brave"><svg viewBox="0 0 24 24"><path d="M7 1h10l2 2 3 1v4l-2 9q-1 3-8 7-7-4-8-7L2 8V4l3-1z" fill="#fb4a26"/><path d="M7 6l5 1 5-1 2 4-3 5-1 3-3 2-3-2-1-3-3-5z" fill="#fff"/><path d="M8 10l3 1-1 2zM16 10l-3 1 1 2zM10 16l2-1 2 1" fill="#fb4a26" stroke="#fb4a26"/></svg></button>
      <button class="app" aria-label="Everything"><svg viewBox="0 0 24 24"><circle cx="15" cy="9" r="6.500" fill="none" stroke="#ff8000" stroke-width="3.500"/><path d="M10 14l-8 8" stroke="#ff8000" stroke-width="4"/></svg></button>
      <button class="app running" aria-label="Photos"><svg viewBox="0 0 24 24"><rect x="1" y="1" width="22" height="22" rx="2" fill="#1f6fd0"/><path d="M1 20l10-11 12 12v1l-1 1H2z" fill="#5ad0f8"/><path d="M4 23l8-8 8 8z" fill="#1a9ae8"/><circle cx="17" cy="5" r="2" fill="#fff"/></svg></button>
      <button class="app running current" aria-label="FreeCAD"><svg><use href="#app-big"/></svg></button>
      <button class="app running" aria-label="Chrome"><svg viewBox="0 0 24 24"><circle cx="12" cy="12" r="11.500" fill="#fbc116"/><path d="M2 6.500Q6 .5 12 .5t10 6H12l-5 8z" fill="#e33b2e"/><path d="M2 6.500q-4 8 2 13.500 3 3 7 3.500l5-9-9-1z" fill="#269f42"/><circle cx="12" cy="12" r="5.500" fill="#fff"/><circle cx="12" cy="12" r="4.300" fill="#3c7de8"/><circle cx="18" cy="18" r="6" fill="#59605a"/><path d="M15 14l3 2v8h-3zM20 13l2 3-1 7h-2z" fill="#ddd"/></svg></button>
      <button class="app running" aria-label="Settings"><svg viewBox="0 0 24 24"><circle cx="12" cy="12" r="5.500" fill="none" stroke="#fff" stroke-width="3"/><path d="M12 2v4M12 18v4M2 12h4M18 12h4M5 5l3 3M16 16l3 3M19 5l-3 3M8 16l-3 3" stroke="#fff" stroke-width="3.500"/></svg></button>
    </div>
    <div class="tray">
      <button class="weather"><svg viewBox="0 0 24 24"><circle cx="12" cy="13" r="10" fill="#f79a1c"/><path d="M3 9q-4-1-2-4 1-2 4-2 3-4 7 0 4 2 2 6z" fill="#bcd2f4"/><path d="M13 22q-4-1-2-4 2-2 4-1 3-4 6 0 4 1 2 5z" fill="#cfe0fa"/><circle cx="18" cy="6" r="6" fill="#c42b1c"/><path d="M16.500 5L18.500 3.500V9" fill="none" stroke="#fff"/></svg><span>33°C</span><span>Partly sunny</span></button>
      <button aria-label="Show hidden icons"><svg class="i16" viewBox="0 0 16 16"><path d="M3 11l5-6 5 6" fill="none" stroke="#fff" stroke-width="1.300"/></svg></button>
      <button aria-label="Meet now"><svg class="i16" viewBox="0 0 16 16"><g fill="none" stroke="#fff" stroke-width="1.200"><rect x="3" y="5" width="7" height="7" rx="1"/><path d="M10 8l3-2v5l-3-2M4 2q4-2 8 0M4 15q4 2 8 0"/></g></svg></button>
      <button aria-label="Network"><svg class="i16" viewBox="0 0 16 16"><g fill="none" stroke="#fff" stroke-width="1.200"><path d="M5 3h10.500v8H4V8M9 11v3M6 14.500h7"/><path d="M.5 2h4v4h-4zM2.500 6v2"/></g></svg></button>
      <button aria-label="Volume"><svg class="i16" viewBox="0 0 16 16"><g fill="none" stroke="#fff" stroke-width="1.200"><path d="M1 6h2l4-3v10l-4-3H1zM9 6q1.500 2 0 4M11 4q3 4 0 8"/><path d="M13 2q4 6 0 12" stroke="#888"/></g></svg></button>
      <button class="pen" aria-label="Ink"><svg class="i16" viewBox="0 0 16 16"><path d="M5 13L13 2l2 2L7 14l-3 1zM1 11q-1-3 3-2t1 4q-3 2-4 0zM9 12q4-3 5-4 3 0 0 3l-2 2" fill="none" stroke="#fff" stroke-width="1.200"/></svg></button>
      <button class="lang">ENG</button>
      <button class="clock"><span>16:14</span><span>08-05-2025</span></button>
      <button class="notify" aria-label="Notifications"><svg class="i16" viewBox="0 0 16 16"><path d="M0 1h16v12h-6l-2 3-2-3H0z" fill="#fff"/><path d="M3 4.500h10M3 7h10M3 9.500h7" stroke="#222"/></svg></button>
    </div>
  </div>

</body>
</html>
```

FILE: styles.css
```css
* {
  box-sizing: border-box;
}

body {
  margin: 0;
  height: 100vh;
  display: flex;
  flex-direction: column;
  overflow: hidden;
  background-color: #f0f0f0;
  color: #000;
  font-family: Roboto, 'Open Sans', sans-serif;
  font-size: 12px;
  line-height: 15px;
}

h1, h2, h3, p, ul {
  margin: 0;
  padding: 0;
  font-size: inherit;
  font-weight: normal;
}

ul {
  list-style: none;
}

button, select, input, textarea {
  font: inherit;
  color: inherit;
}

button {
  display: flex;
  align-items: center;
  justify-content: center;
  padding: 0;
  border: none;
  background: none;
}

svg {
  display: block;
  flex: none;
}

.sprite {
  position: absolute;
  width: 0;
  height: 0;
}

.i16 {
  width: 16px;
  height: 16px;
}

.i10 {
  width: 10px;
  height: 10px;
}

/* Title bar and menus */
.titlebar {
  flex: none;
  height: 22px;
  padding-left: 2px;
  display: flex;
  align-items: center;
  gap: 5px;
  background-color: #fff;
}

.window-buttons {
  display: flex;
  margin-left: auto;
}

.window-buttons button {
  width: 46px;
  height: 22px;
}

.menubar {
  flex: none;
  height: 22px;
  padding: 2px 1px 0;
  display: flex;
  gap: 1px;
  background-color: #fff;
}

.menubar button {
  padding: 0 7px;
}

/* Toolbars */
.toolrow {
  flex: none;
  height: 34px;
  display: flex;
  border-bottom: 1px solid #b4b4b4;
}

.toolbar {
  flex: none;
  display: flex;
  align-items: center;
  padding-right: 2px;
  border-right: 1px solid #b4b4b4;
}

.toolbar::before, .popup::before {
  content: '';
  flex: none;
  width: 2px;
  height: 26px;
  margin: 0 4px 0 3px;
  background: repeating-linear-gradient(#b8b8b8 0 2px, transparent 2px 4px);
}

.toolbar-last {
  border-right-color: transparent;
}

.geometry {
  flex: 1 1 0;
  min-width: 0;
  overflow: hidden;
}

.tool {
  flex: none;
  width: 31px;
  height: 29px;
}

.tool svg {
  width: 24px;
  height: 24px;
}

.caret {
  flex: none;
  width: 12px;
  height: 29px;
}

.caret::before, .tri {
  content: '';
  border: 4px solid transparent;
  border-top-color: #222;
  border-bottom-width: 0;
}

.caret.off::before {
  border-top-color: #777;
}

.on {
  background-color: #c0dcf3;
  box-shadow: inset 0 0 0 1px #90c8f6;
}

.hover {
  background-color: #d8e6f2;
  box-shadow: inset 0 0 0 1px #c0dcf3;
}

.sep {
  flex: none;
  width: 2px;
  height: 24px;
  margin: 0 2px;
  border-left: 1px solid #d0d0d0;
}

.more {
  flex: none;
  width: 12px;
  height: 29px;
  font-size: 13px;
}

.constraints-slot {
  position: relative;
  flex: none;
  width: 160px;
}

.popup {
  position: absolute;
  top: 0;
  left: 0;
  z-index: 2;
  width: 160px;
  height: 154px;
  padding: 1px 0;
  display: flex;
  background-color: #f1f1f1;
  border: 1px solid #ccc;
}

.popup::before {
  height: 146px;
  margin: 3px 3px 0;
}

.popup-rows {
  flex: 1;
}

.popup-row {
  display: flex;
  align-items: center;
  margin-bottom: 1px;
}

.tooltip {
  position: absolute;
  left: 32px;
  top: 97px;
  padding: 2px 5px 0;
  white-space: nowrap;
  color: #575757;
  background-color: #fff;
  border: 1px solid #767676;
  box-shadow: 3px 3px 3px rgba(0, 0, 0, 0.5);
}

/* Combo boxes, buttons, check boxes */
.combo {
  position: relative;
  width: 96px;
  height: 20px;
}

.combo select {
  width: 100%;
  height: 100%;
  padding: 0 3px;
  appearance: none;
  background-color: #e1e1e1;
  border: 1px solid #adadad;
  border-radius: 0;
}

.combo-arrow {
  position: absolute;
  right: 4px;
  top: 50%;
  width: 10px;
  height: 6px;
  margin-top: -3px;
  color: #444;
  pointer-events: none;
}

.combo.disabled select {
  color: #838383;
  background-color: #ccc;
  border-color: #bfbfbf;
  opacity: 1;
}

.combo.disabled .combo-arrow {
  color: #999;
}

.workbench {
  width: 145px;
  height: 22px;
  font-size: 11px;
}

.workbench select {
  padding-left: 22px;
}

.combo-icon {
  position: absolute;
  left: 5px;
  top: 3px;
  pointer-events: none;
}

.push {
  height: 21px;
  background-color: #e1e1e1;
  border: 1px solid #adadad;
}

input[type="checkbox"] {
  appearance: none;
  flex: none;
  width: 13px;
  height: 13px;
  margin: 0;
  display: flex;
  justify-content: center;
  background-color: #fff;
  border: 1px solid #333;
}

input[type="checkbox"]:checked::before {
  content: '';
  width: 5px;
  height: 9px;
  border: solid #333;
  border-width: 0 1px 1px 0;
  transform: rotate(42deg);
}

.check {
  display: flex;
  align-items: center;
  gap: 5px;
}

/* Combo view */
.workspace {
  flex: 1;
  min-height: 0;
  display: flex;
}

.combo-view {
  flex: none;
  width: 268px;
  margin: 1px 4px 7px 0;
  display: flex;
  flex-direction: column;
}

.dock-title {
  flex: none;
  height: 19px;
  padding: 0 6px 0 4px;
  display: flex;
  align-items: center;
  gap: 11px;
  background-color: #dadada;
  border: 1px solid #bababa;
}

.dock-title h2 {
  flex: 1;
  padding-top: 2px;
}

.side-tabs {
  flex: none;
  height: 26px;
  padding: 2px 0 0 2px;
  display: flex;
  align-items: flex-end;
}

.side-tab {
  width: 48px;
  height: 22px;
  border: 1px solid #d9d9d9;
  border-bottom: none;
  font-size: 11px;
}

.side-tab.active {
  width: 73px;
  height: 24px;
  gap: 3px;
  background-color: #fff;
}

.task-frame {
  flex: 1;
  min-height: 0;
  margin: 1px 4px 3px 2px;
  display: flex;
  border: 1px solid #828790;
  outline: 1px solid #fff;
}

.task-panel {
  flex: 1;
  padding: 18px 8px 0;
  display: flex;
  flex-direction: column;
  gap: 9px;
  overflow: hidden;
  font-size: 11px;
  line-height: 13px;
  background: linear-gradient(#acacc0, #333366 300px);
}

.close-task {
  flex: none;
  width: 73px;
  margin: 0 auto 9px;
}

.group {
  flex: none;
  border: 1px solid #fff;
  border-radius: 3px 3px 0 0;
}

.group-head {
  height: 24px;
  padding: 0 3px 0 6px;
  display: flex;
  align-items: center;
  gap: 2px;
  font-size: 12px;
  font-weight: bold;
  color: #215dc6;
  background: linear-gradient(90deg, #fff, #c6d3f7);
}

.fold {
  margin-left: auto;
}

.group-body {
  padding: 0 13px;
  background-color: #d6dff7;
  border-top: 1px solid #fff;
}

.field {
  display: flex;
  align-items: center;
  justify-content: space-between;
}

.solver {
  height: 123px;
  padding-top: 13px;
  white-space: nowrap;
}

.solver a {
  color: #00f;
  background-color: #f0f4fc;
}

.solved {
  margin: 6px 0 8px;
  color: #008000;
}

.solved span {
  background-color: #e8e8e8;
}

.solver .field {
  margin-top: 8px;
}

.solver .push {
  width: 94px;
}

.constraints {
  padding: 13px 13px 12px;
}

.constraints .check {
  height: 13px;
  margin-top: 8px;
}

.constraints .check + .check {
  margin-top: 10px;
}

.list {
  height: 192px;
  margin-top: 8px;
  padding: 1px 4px;
  background-color: #fff;
  border: 1px solid #828790;
}

.list li, .list label {
  height: 20px;
  display: flex;
  align-items: center;
  font-size: 12px;
}

.list .i16 {
  margin: 0 6px;
}

.elements {
  padding-top: 12px;
}

.elements .field + .field {
  margin-top: 6px;
}

.list.edges {
  margin-top: 6px;
}

.list.edges .i16 {
  margin: 0 6px 0 0;
}

.scrollbar {
  flex: none;
  width: 17px;
  padding: 7px 1px 5px 0;
  display: flex;
  flex-direction: column;
  align-items: center;
  gap: 5px;
  background-color: #f0f0f0;
}

.scroll-arrow {
  width: 10px;
  height: 6px;
  color: #333;
}

.scroll-arrow.up {
  transform: rotate(180deg);
}

.thumb {
  width: 15px;
  height: 462px;
  margin-bottom: auto;
  background-color: #cdcdcd;
}

/* 3D view */
.document {
  flex: 1;
  min-width: 0;
  display: flex;
  flex-direction: column;
}

.view3d {
  flex: 1;
  min-height: 0;
  background-color: #fff;
}

.view3d svg {
  width: 100%;
  height: 100%;
}

.doc-tabs {
  flex: none;
  height: 29px;
  padding-left: 2px;
  display: flex;
  align-items: flex-start;
  border-top: 1px solid #a0a0a0;
  font-size: 11px;
}

.doc-tab {
  height: 22px;
  padding: 0 13px 0 10px;
  display: flex;
  align-items: center;
  gap: 5px;
  border: 1px solid #d9d9d9;
  border-top: none;
  border-left: none;
}

.doc-tab.active {
  height: 24px;
  margin-top: -1px;
  padding-left: 13px;
  background-color: #fff;
}

.doc-tab button {
  width: 14px;
  height: 14px;
  color: #fff;
  background-color: #bbb;
  border: 1px solid #999;
  border-radius: 2px;
}

.doc-tab.active button {
  background-color: #e07a52;
  border-color: #d0402c;
}

/* Report view and status bar */
.report {
  flex: none;
}

.report textarea {
  display: block;
  width: 100%;
  height: 133px;
  margin-top: 2px;
  background-color: #fff;
  border: 1px solid #767676;
  resize: none;
}

.statusbar {
  flex: none;
  height: 29px;
  padding: 2px 2px 0 6px;
  display: flex;
  align-items: center;
}

.nav-style {
  gap: 5px;
  margin-left: auto;
  font-size: 11px;
}

.mouse {
  width: 10px;
  height: 14px;
}

.dims {
  margin-left: 6px;
  padding: 5px 0 5px 4px;
  border-left: 1px solid #d0d0d0;
  font-size: 11px;
}

/* Windows taskbar */
.taskbar {
  flex: none;
  height: 40px;
  display: flex;
  color: #fff;
  background: linear-gradient(90deg, #24282b, #2b2a29 25%, #252525 45%, #2a2625 75%, #222426 85%, #262626);
}

.start {
  width: 48px;
}

.start svg {
  width: 16px;
  height: 16px;
}

.search {
  width: 288px;
  padding-left: 12px;
  display: flex;
  align-items: center;
  gap: 10px;
  overflow: hidden;
  color: #333;
  background-color: #f2f2f2;
  border: 1px solid #bbb;
}

.search-icon {
  width: 16px;
  height: 16px;
}

.search input {
  flex: 1;
  min-width: 0;
  padding: 2px 0 0;
  border: none;
  background: none;
  font-size: 15px;
}

.search input::placeholder {
  color: #333;
}

.donkey {
  width: 80px;
  height: 38px;
}

.apps {
  display: flex;
  gap: 1px;
  padding-left: 3px;
}

.app {
  width: 48px;
  height: 40px;
}

.app svg {
  width: 24px;
  height: 24px;
}

.running {
  background: linear-gradient(#76b9ed, #76b9ed) center bottom / 40px 2px no-repeat;
}

.current {
  background-color: #504e4d;
  background-size: 48px 2px;
}

.tray {
  margin-left: auto;
  padding-right: 4px;
  display: flex;
  align-items: center;
}

.tray button {
  height: 40px;
  padding: 1px 4px 0;
}

.tray .weather {
  gap: 8px;
  padding-right: 18px;
  font-size: 14px;
}

.weather svg {
  width: 24px;
  height: 24px;
}

.tray .pen {
  padding-left: 8px;
}

.tray .lang {
  width: 40px;
}

.tray .clock {
  width: 70px;
  flex-direction: column;
  line-height: 18px;
}

.tray .notify {
  width: 49px;
  padding-right: 12px;
  border-right: 1px solid #666;
}
```
